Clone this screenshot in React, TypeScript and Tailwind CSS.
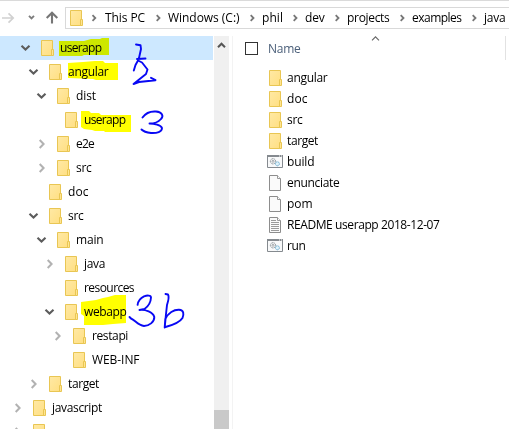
import { useLayoutEffect, useRef, useState } from "react";

function Label({ text, width, className = "" }: { text: string; width: number; className?: string }) {
  const ref = useRef<HTMLSpanElement>(null);
  const [spacing, setSpacing] = useState(0);
  useLayoutEffect(() => {
    if (ref.current) {
      const natural = ref.current.getBoundingClientRect().width;
      setSpacing((width - natural) / text.length);
    }
  }, [text, width]);
  return (
    <span ref={ref} className={"shrink-0 whitespace-nowrap " + className} style={{ letterSpacing: spacing }}>
      {text}
    </span>
  );
}

function Folder() {
  return (
    <svg className="h-4 w-[13px] shrink-0" viewBox="0 0 13 16">
      <defs>
        <linearGradient id="folder" x1="0" y1="0" x2="1" y2="1">
          <stop offset="0" stopColor="#ffe9a5" />
          <stop offset="1" stopColor="#ffdf82" />
        </linearGradient>
      </defs>
      <path d="M.5.5H11.5V15.5H.5Z" fill="url(#folder)" stroke="#e9c653" />
      <path d="M10.5 15.5V9.5H12.5V15.5Z" fill="#ffe591" stroke="#e9c653" />
    </svg>
  );
}

type Mark = "open" | "closed" | "none";

function Chevron({ mark }: { mark: Mark }) {
  return (
    <svg className="h-4 w-4 shrink-0" viewBox="0 0 16 16" fill="none">
      {mark === "open" && <path d="M4.5 5.7 8.5 9.5 12.5 5.7" stroke="#5c5c5c" strokeWidth="2.1" />}
      {mark === "closed" && <path d="M6.7 4 10.6 8 6.7 12" stroke="#b2b2b2" strokeWidth="2" />}
    </svg>
  );
}

const tree: { name: string; pad: string; mark: Mark; width: number }[] = [
  { name: "userapp", pad: "pl-[17px]", mark: "open", width: 41.5 },
  { name: "angular", pad: "pl-[25px]", mark: "open", width: 40.5 },
  { name: "dist", pad: "pl-[33px]", mark: "open", width: 20 },
  { name: "userapp", pad: "pl-[41px]", mark: "none", width: 41.5 },
  { name: "e2e", pad: "pl-[33px]", mark: "closed", width: 18 },
  { name: "src", pad: "pl-[33px]", mark: "closed", width: 15.5 },
  { name: "doc", pad: "pl-[25px]", mark: "none", width: 20.5 },
  { name: "src", pad: "pl-[25px]", mark: "open", width: 15.5 },
  { name: "main", pad: "pl-[33px]", mark: "open", width: 27.5 },
  { name: "java", pad: "pl-[41px]", mark: "closed", width: 21 },
  { name: "resources", pad: "pl-[41px]", mark: "none", width: 50 },
  { name: "webapp", pad: "pl-[41px]", mark: "open", width: 42.5 },
  { name: "restapi", pad: "pl-[49px]", mark: "closed", width: 36 },
  { name: "WEB-INF", pad: "pl-[49px]", mark: "none", width: 47.5 },
  { name: "target", pad: "pl-[25px]", mark: "closed", width: 31 },
  { name: "javascript", pad: "pl-[9px]", mark: "closed", width: 50 },
  { name: "", pad: "pl-[9px]", mark: "closed", width: 0 },
];

const crumbs = [
  { name: "This PC", width: 40, box: "w-[63px]" },
  { name: "Windows (C:)", width: 71.5, box: "w-[94px]" },
  { name: "phil", width: 21, box: "w-[43px]" },
  { name: "dev", width: 19.5, box: "w-[42px]" },
  { name: "projects", width: 42.5, box: "w-[65px]" },
  { name: "examples", width: 49.5, box: "w-[72px]" },
  { name: "java", width: 21.5, box: "w-[24px]" },
];

type Kind = "folder" | "batch" | "file" | "text";

const files: { name: string; kind: Kind; width: number }[] = [
  { name: "angular", kind: "folder", width: 40.5 },
  { name: "doc", kind: "folder", width: 20.5 },
  { name: "src", kind: "folder", width: 15.5 },
  { name: "target", kind: "folder", width: 31 },
  { name: "build", kind: "batch", width: 27.5 },
  { name: "enunciate", kind: "file", width: 52.5 },
  { name: "pom", kind: "file", width: 25.5 },
  { name: "README userapp 2018-12-07", kind: "text", width: 152.5 },
  { name: "run", kind: "batch", width: 18.5 },
];

function FileIcon({ kind }: { kind: Kind }) {
  if (kind === "folder") return <Folder />;
  if (kind === "batch")
    return (
      <svg className="h-[13px] w-4 shrink-0" viewBox="0 0 16 13" fill="none">
        <path d="M.5.5H15.5V12.5H.5Z" fill="#f8f9fa" stroke="#858a8f" />
        <path d="M0 1H16" stroke="#858a8f" strokeWidth="2" />
        <path d="M12 1H13M14 1H15" stroke="#fff" />
        <circle cx="6" cy="6.3" r="2.6" stroke="#858c91" strokeDasharray="1.3 .5" />
        <circle cx="6" cy="6.3" r="1" stroke="#8f9599" strokeWidth=".8" />
        <circle cx="10.4" cy="8.8" r="2" fill="#dff2fa" stroke="#6faed0" strokeDasharray="1.4 .4" />
      </svg>
    );
  return (
    <svg className="h-4 w-[13px] shrink-0" viewBox="0 0 13 16" fill="none">
      <path d="M.5.5H8.5L11.5 3.5V15.5H.5Z" fill="#fafafa" stroke="#8d8d8d" />
      <path d="M8.5.5V3.5H11.5" fill="#fff" stroke="#999" />
      {kind === "text" && <path d="M2 3.5H7M2 5.5H10M2 7.5H10M2 9.5H10M2 11.5H10M2 13.5H10" stroke="#9a9a9a" />}
    </svg>
  );
}

function Annotations() {
  return (
    <svg className="pointer-events-none absolute inset-0 mix-blend-multiply" width="509" height="429" viewBox="0 0 509 429">
      <g fill="#ffff00">
        <path d="M59 41H84L91 39H100L102 38H109V55H84L82 56H59Z" />
        <path d="M68 63L83 62L95 61H103L105 63H118V80H96L93 79L68 78Z" />
        <path d="M81 111H89L91 113H99L101 115H131V132H105L104 131H95L92 130L84 129L81 127Z" />
        <path d="M81 302L96 300L103 298L108 297L115 295H126V323L113 324L103 325H84V316L81 314Z" />
      </g>
      <g fill="none" stroke="#0808f4" strokeWidth="1.9" strokeLinecap="round" strokeLinejoin="round">
        <path d="M136 44.5L140.5 45.2L141 49L139 58M137 59L145.5 58.5" />
        <path d="M133.8 70.5L135.5 65L138 60.5L142 62.5L147.5 69.5L146 74L133.5 84L139 82L155.5 80.2L151 77.8" />
        <path d="M142.5 117.5C145 114 150 111 156 111.5C162 112 164 116 161 119C158 122.5 153 123.5 149.5 123.5C154 123.5 161 125 162 128C162 132 157 133.3 151 133C147 132.5 143.5 131.5 141.5 129.5" />
        <path d="M137.6 304.8C138 301.5 140.5 298 144 296.3C147 295.3 151 295 151 297.5C150.8 302 148 306.5 144.5 309L139.5 310C145.5 309.3 153 312 154.3 317C154.5 322 149 326 144 326C138 325.5 135 320 131 318.5L129.5 317" />
        <path d="M165.5 294L168 294.5C169.5 297 168 302 167 305L166 314L164.7 327.5L165.3 319C168 313 174 309.5 179 309.7C184 310 184 314 182.5 318C180 322 173 325 165.5 327" />
      </g>
    </svg>
  );
}

export default function App() {
  return (
    <main className="relative flex h-[429px] w-[509px] flex-col overflow-hidden bg-white font-['Open_Sans','Noto_Sans',sans-serif] text-[12px] leading-[16px] text-black">
      <header className="flex h-9 shrink-0 border-t border-[#dadada] pt-1.5">
        <svg className="h-[22px] w-[65px] shrink-0" viewBox="0 0 65 22" fill="none">
          <path d="M2 11H13M8.5 6.3L13.2 11L8.5 15.7" stroke="#d1d1d1" strokeWidth="1.7" />
          <path d="M29 8.8L31.5 11.3L34 8.8" stroke="#7d7d7d" strokeWidth="1.9" />
          <path d="M52 16.5V6.5M46.7 11L52 5.8L57.3 11" stroke="#767676" strokeWidth="2.1" />
        </svg>
        <div className="flex h-[22px] flex-1 items-center border-y border-l border-[#d9d9d9] pl-1">
          <Folder />
          <svg className="ml-[5px] h-4 w-4 shrink-0" viewBox="0 0 16 16" fill="none">
            <path d="M4.5 5.2L7.3 8L4.5 10.8" stroke="#777" strokeWidth="1.8" />
          </svg>
          <nav className="flex pl-[1px]">
            {crumbs.map((crumb, index) => (
              <div key={crumb.name} className={"flex shrink-0 items-center justify-between " + crumb.box}>
                <Label text={crumb.name} width={crumb.width} />
                {index < crumbs.length - 1 && (
                  <svg className="h-4 w-4 shrink-0" viewBox="0 0 16 16" fill="none">
                    <path d="M4.7 5.2L7.5 8L4.7 10.8" stroke="#777" strokeWidth="1.8" />
                  </svg>
                )}
              </div>
            ))}
          </nav>
        </div>
      </header>
      <div className="flex min-h-0 flex-1">
        <aside className="w-[213px] shrink-0 overflow-hidden">
          {tree.map((node, index) => (
            <div key={index} className={"flex h-6 items-center " + node.pad + (index === 0 ? " bg-[#cde8ff]" : "")}>
              <Chevron mark={node.mark} />
              <div className="ml-2 mr-1.5 flex">
                <Folder />
              </div>
              {node.name && <Label text={node.name} width={node.width} />}
            </div>
          ))}
        </aside>
        <div className="ml-px flex w-[15px] shrink-0 flex-col justify-between bg-[#f0f0f0]">
          <svg className="h-[17px] w-[15px]" viewBox="0 0 15 17" fill="none">
            <path d="M4 11.2L7.5 7.7L11 11.2" stroke="#555" strokeWidth="2" />
          </svg>
          <div className="h-[19px] bg-[#c9c9c9]" />
        </div>
        <section className="ml-[3px] flex-1 border-l border-[#f3f3f3]">
          <div className="relative flex h-6 items-center pl-3">
            <div className="h-[13px] w-[13px] border border-[#333]" />
            <Label text="Name" width={32.5} className="ml-2.5 translate-y-px text-[#4c607a]" />
            <svg className="absolute left-[138px] top-0 h-[6px] w-[9px]" viewBox="0 0 9 6" fill="none">
              <path d="M1 4.3L4.5 .8L8 4.3" stroke="#666" strokeWidth="1.1" />
            </svg>
            <div className="absolute left-[272px] h-6 w-px bg-[#e2e2e2]" />
          </div>
          <ul className="mt-[7px]">
            {files.map((file) => (
              <li key={file.name} className="flex h-[21px] items-center pl-[34px]">
                <div className={"flex w-5 shrink-0 " + (file.kind === "batch" ? "" : "pl-0.5")}>
                  <FileIcon kind={file.kind} />
                </div>
                <Label text={file.name} width={file.width} />
              </li>
            ))}
          </ul>
        </section>
      </div>
      <Annotations />
    </main>
  );
}
